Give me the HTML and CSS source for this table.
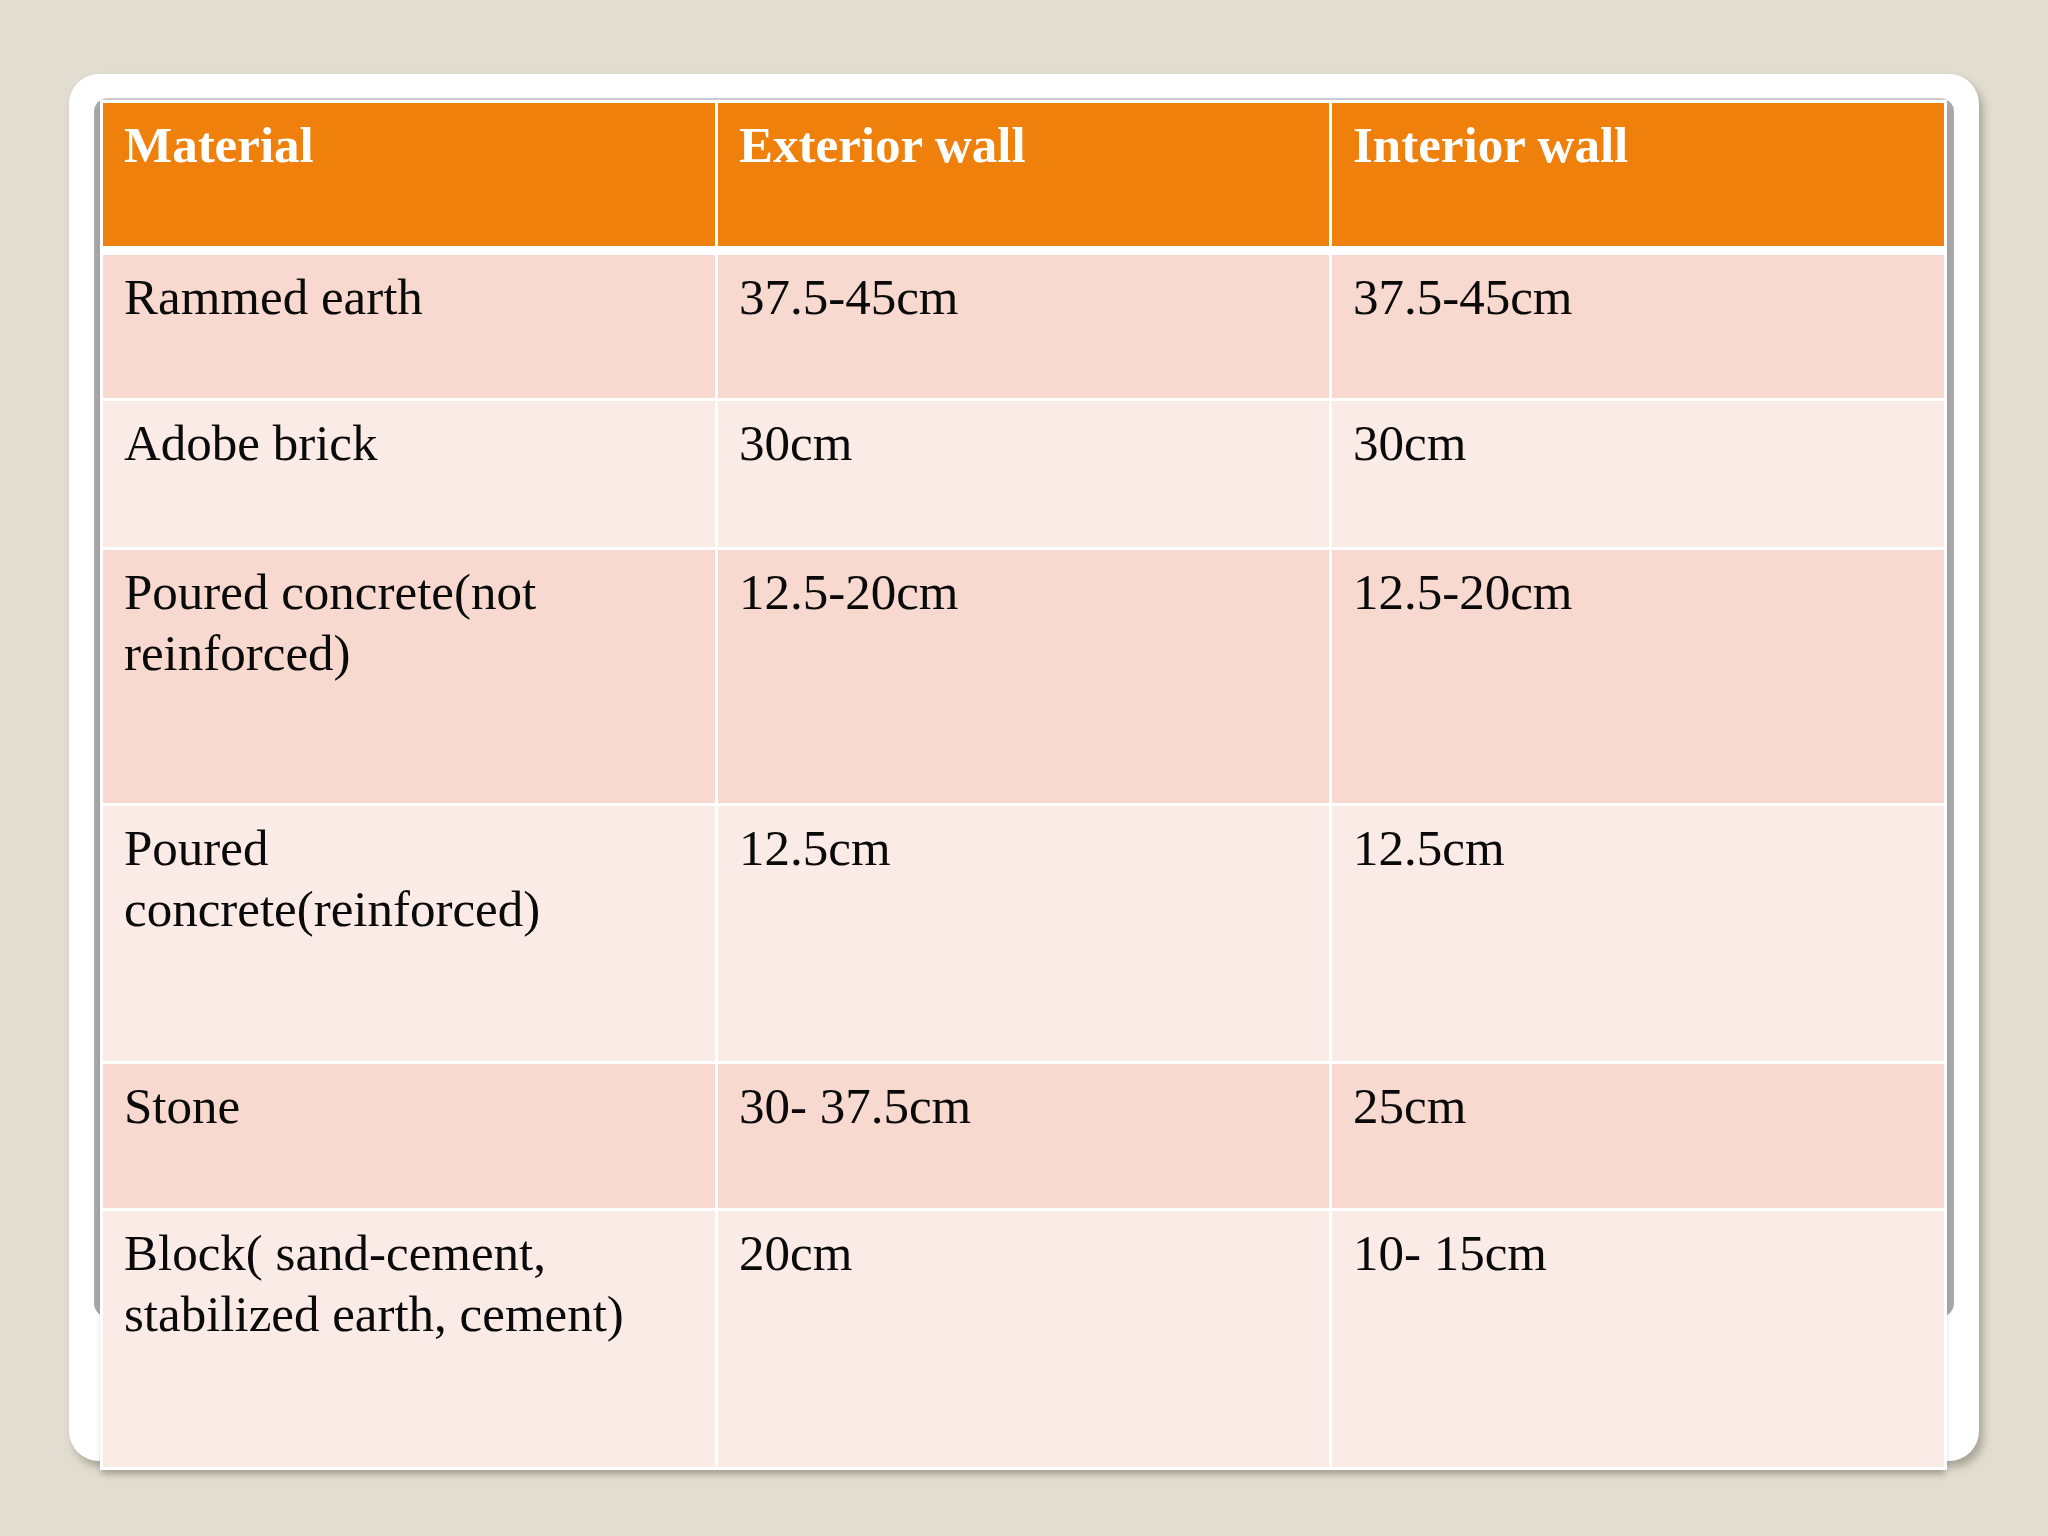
FILE: index.html
```html
<!DOCTYPE html>
<html lang="en">
<head>
<meta charset="utf-8">
<title>Wall thickness by material</title>
<link rel="stylesheet" href="styles.css">
</head>
<body>
<div class="card">
  <div class="frame">
    <table class="grid">
      <colgroup>
        <col class="c1"><col class="c2"><col class="c3">
      </colgroup>
      <thead>
        <tr class="head">
          <th>Material</th>
          <th>Exterior wall</th>
          <th>Interior wall</th>
        </tr>
      </thead>
      <tbody>
        <tr class="odd h1">
          <td>Rammed earth</td>
          <td>37.5-45cm</td>
          <td>37.5-45cm</td>
        </tr>
        <tr class="even h2">
          <td>Adobe brick</td>
          <td>30cm</td>
          <td>30cm</td>
        </tr>
        <tr class="odd h3">
          <td>Poured concrete(not reinforced)</td>
          <td>12.5-20cm</td>
          <td>12.5-20cm</td>
        </tr>
        <tr class="even h4">
          <td>Poured concrete(reinforced)</td>
          <td>12.5cm</td>
          <td>12.5cm</td>
        </tr>
        <tr class="odd h5">
          <td>Stone</td>
          <td>30- 37.5cm</td>
          <td>25cm</td>
        </tr>
        <tr class="even h6">
          <td>Block( sand-cement, stabilized earth, cement)</td>
          <td>20cm</td>
          <td>10- 15cm</td>
        </tr>
      </tbody>
    </table>
  </div>
</div>
</body>
</html>
```

FILE: styles.css
```css
html, body {
  margin: 0;
  padding: 0;
}

body {
  background: #e1ded1;
  width: 2048px;
  height: 1536px;
  overflow: hidden;
  font-family: "Liberation Serif", "Times New Roman", serif;
}

.card {
  box-sizing: border-box;
  width: 1910px;
  height: 1387px;
  margin: 74px 0 0 69px;
  padding: 24px 0 0 25px;
  background: #ffffff;
  border-radius: 30px;
  box-shadow: 4px 6px 8px rgba(60, 55, 40, 0.35);
}

.frame {
  box-sizing: border-box;
  width: 1860px;
  height: 1219px;
  padding: 2px 0 0 6px;
  border-radius: 14px;
  background: linear-gradient(#cdc9d3 0, #cdc9d3 3px, #a8a8ac 3px);
}

.grid {
  width: 1847px;
  table-layout: fixed;
  border-collapse: separate;
  border-spacing: 3px;
  background: #ffffff;
  box-shadow: 0 7px 6px -2px rgba(70, 60, 40, 0.3);
}

.c1 { width: 612px; }
.c2 { width: 611px; }
.c3 { width: 612px; }

.grid th,
.grid td {
  box-sizing: border-box;
  padding: 12px 30px 0 21px;
  vertical-align: top;
  text-align: left;
  font-size: 51px;
  line-height: 61px;
}

.grid th {
  background: #ef800b;
  color: #ffffff;
  font-weight: bold;
  border-bottom: 6px solid #ffffff;
}

.grid td {
  color: #0a0a0a;
  font-weight: normal;
}

.odd td { background: #f8d9cf; }
.even td { background: #fbebe7; }

.head { height: 149px; }
.h1 { height: 143px; }
.h2 { height: 146px; }
.h3 { height: 253px; }
.h4 { height: 255px; }
.h5 { height: 144px; }
.h6 { height: 256px; }
```
